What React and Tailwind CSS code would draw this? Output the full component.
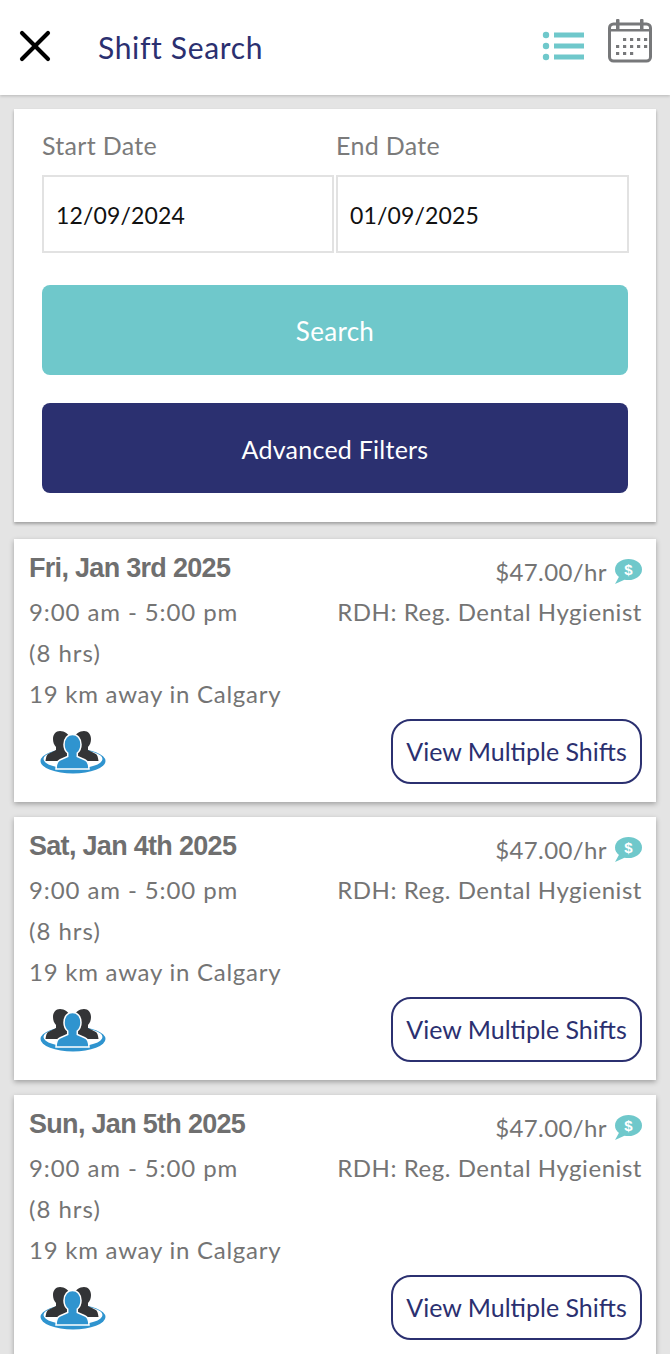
import { X } from 'lucide-react'

const shifts = ['Fri, Jan 3rd 2025', 'Sat, Jan 4th 2025', 'Sun, Jan 5th 2025']

function ListIcon() {
  return (
    <svg width="42" height="32" viewBox="0 0 42 32" fill="#6fc8cb">
      <circle cx="4" cy="5" r="3.2" />
      <circle cx="4" cy="16" r="3.2" />
      <circle cx="4" cy="27" r="3.2" />
      <rect x="12" y="2.5" width="30" height="5" />
      <rect x="12" y="13.5" width="30" height="5" />
      <rect x="12" y="24.5" width="30" height="5" />
    </svg>
  )
}

function CalendarIcon() {
  const dots = [
    [15, 19], [22, 19], [29, 19], [36, 19],
    [8, 26], [15, 26], [22, 26], [29, 26], [36, 26],
    [8, 33], [15, 33], [22, 33],
  ]
  return (
    <svg width="44" height="44" viewBox="0 0 44 44" fill="#77787a">
      <rect x="1.5" y="5" width="41" height="37" rx="4" fill="none" stroke="#77787a" strokeWidth="3" />
      <rect x="2" y="10" width="40" height="2.5" />
      <rect x="8" y="0" width="3.5" height="11" rx="1" />
      <rect x="32" y="0" width="3.5" height="11" rx="1" />
      {dots.map(([x, y]) => <rect key={`${x}-${y}`} x={x} y={y} width="3.2" height="3" />)}
    </svg>
  )
}

function MoneyIcon() {
  return (
    <svg width="28" height="25" viewBox="0 0 28 25">
      <ellipse cx="14.500" cy="10.500" rx="13.500" ry="10.500" fill="#6fc8cb" />
      <path d="M6 16 1 25l10-4.500z" fill="#6fc8cb" />
      <text x="14.500" y="15.500" textAnchor="middle" fontSize="15" fontWeight="700" fill="#fff" fontFamily="'Liberation Sans', sans-serif">$</text>
    </svg>
  )
}

function GroupIcon() {
  return (
    <svg width="66" height="46" viewBox="0 0 66 46">
      <path fillRule="evenodd" fill="#2f94cf" d="M.5 31a32.500 12.500 0 1 0 65 0a32.500 12.500 0 1 0-65 0zM3.500 29a29.500 9.500 0 1 0 59 0a29.500 9.500 0 1 0-59 0z" />
      <path d="M20 1c-4.200 0-7 3.500-7 8 0 3 1 6 3 8v3l-7 3.500c-2.500 1-3 4-3.500 7.500H28V17c1.500-2 2-5 2-8 0-4.500-5.800-8-10-8z" fill="#333436" />
      <path d="M44 1c4.200 0 7 3.500 7 8 0 3-1 6-3 8v3l7 3.500c2.500 1 3 4 3.500 7.500H36V17c-1.500-2-2-5-2-8 0-4.500 5.800-8 10-8z" fill="#333436" />
      <path d="M32.500 4.500c-5 0-8.500 4-8.500 10 0 3.500 1.200 6.500 3.700 8.500v3.500l-8 3.500c-2.500 1-3.500 4-3.700 9h33c-.2-5-1.200-8-3.700-9l-8-3.500V23c2.500-2 3.700-5 3.700-8.500 0-6-3.500-10-8.500-10z" fill="#2f94cf" stroke="#fff" strokeWidth="1.500" />
    </svg>
  )
}

function ShiftCard({ date }) {
  return (
    <div className="bg-white h-[263px] shrink-0 pl-[15px] pr-[14px] pt-[12px] shadow-[0_2px_5px_rgba(0,0,0,0.3)] text-[#747474] text-[24px] flex flex-col">
      <div className="flex justify-between items-center h-[36px]">
        <span className="-mt-[2px] font-['Liberation_Sans',sans-serif] font-bold text-[27px] tracking-[-0.7px] text-[#6f6f6f]">{date}</span>
        <span className="flex items-center gap-[7px] mt-[5px] tracking-[0.4px]">$47.00/hr <MoneyIcon /></span>
      </div>
      <div className="flex justify-between h-[41px] items-center mt-[4px]">
        <span className="tracking-[0.9px]">9:00 am - 5:00 pm</span>
        <span className="tracking-[0.55px]">RDH: Reg. Dental Hygienist</span>
      </div>
      <div className="h-[41px] flex items-center tracking-[1px]">(8 hrs)</div>
      <div className="h-[41px] flex items-center tracking-[0.75px]">19 km away in Calgary</div>
      <div className="flex justify-between mt-[5px]">
        <div className="ml-[11px] mt-[11px]"><GroupIcon /></div>
        <button className="w-[251px] h-[65px] rounded-[20px] border-2 border-[#2b3070] text-[#2b3070] text-[25px]">View Multiple Shifts</button>
      </div>
    </div>
  )
}

export default function App() {
  return (
    <div className="h-[1354px] overflow-hidden bg-[#e4e4e4] font-['Lato',sans-serif]">
      <div className="h-[95px] bg-white flex items-center pl-[9px] pr-[18px] shadow-[0_1px_3px_rgba(0,0,0,0.2)]">
        <X size={52} strokeWidth={1.9} color="#000" className="-mt-[4px]" />
        <h1 className="ml-[37px] text-[#2b3070] text-[30px] tracking-[0.65px]">Shift Search</h1>
        <div className="ml-auto mr-[24px] -mt-[4px]"><ListIcon /></div>
        <div className="-mt-[14px]"><CalendarIcon /></div>
      </div>

      <div className="mx-[14px] mt-[14px] flex flex-col gap-[15px]">
        <div className="bg-white h-[413px] mb-[2px] px-[28px] pt-[18px] shadow-[0_2px_3px_rgba(0,0,0,0.3)]">
          <div className="grid grid-cols-[292px_293px] gap-[2px] text-[25px] text-[#7b7b7b] tracking-[0.3px]">
            <div>
              <label className="block h-[48px] leading-[36px]">Start Date</label>
              <div className="h-[78px] border-2 border-[#e2e2e2] flex items-center pt-[2px] pl-[12px] text-[#111] text-[23px] tracking-[0.15px]">12/09/2024</div>
            </div>
            <div>
              <label className="block h-[48px] leading-[36px]">End Date</label>
              <div className="h-[78px] border-2 border-[#e2e2e2] flex items-center pt-[2px] pl-[12px] text-[#111] text-[23px] tracking-[0.15px]">01/09/2025</div>
            </div>
          </div>
          <button className="mt-[32px] w-full h-[90px] pt-[3px] rounded-[8px] bg-[#6fc8cb] text-white text-[26px] tracking-[0.3px] block">Search</button>
          <button className="mt-[28px] w-full h-[90px] pt-[3px] rounded-[8px] bg-[#2b3070] text-white text-[25px] tracking-[0.25px] block">Advanced Filters</button>
        </div>
        {shifts.map(d => <ShiftCard key={d} date={d} />)}
      </div>
    </div>
  )
}
